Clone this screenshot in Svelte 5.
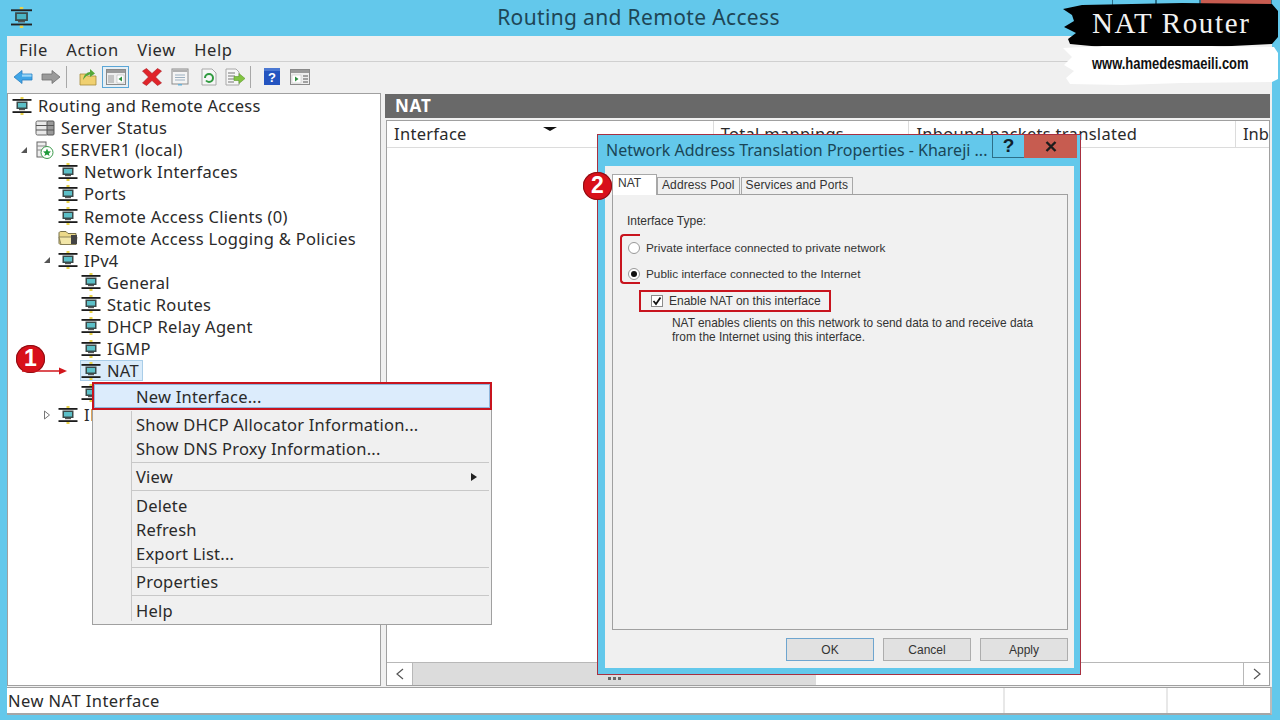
<script>
  const menus = ["File", "Action", "View", "Help"];

  const tree = [
    { label: "Routing and Remote Access", level: 0, icon: "net" },
    { label: "Server Status", level: 1, icon: "status" },
    { label: "SERVER1 (local)", level: 1, icon: "server", exp: "open" },
    { label: "Network Interfaces", level: 2, icon: "net" },
    { label: "Ports", level: 2, icon: "net" },
    { label: "Remote Access Clients (0)", level: 2, icon: "net" },
    { label: "Remote Access Logging & Policies", level: 2, icon: "folder" },
    { label: "IPv4", level: 2, icon: "net", exp: "open" },
    { label: "General", level: 3, icon: "net" },
    { label: "Static Routes", level: 3, icon: "net" },
    { label: "DHCP Relay Agent", level: 3, icon: "net" },
    { label: "IGMP", level: 3, icon: "net" },
    { label: "NAT", level: 3, icon: "net", selected: true },
    { label: "", level: 3, icon: "net" },
    { label: "IPv6", level: 2, icon: "net", exp: "closed" }
  ];

  const contextMenu = [
    [{ label: "New Interface...", hot: true }],
    [{ label: "Show DHCP Allocator Information..." }, { label: "Show DNS Proxy Information..." }],
    [{ label: "View", sub: true }],
    [{ label: "Delete" }, { label: "Refresh" }, { label: "Export List..." }],
    [{ label: "Properties" }],
    [{ label: "Help" }]
  ];
</script>

{#snippet netIcon()}
  <svg class="ico" viewBox="0 0 20 18" width="20" height="18">
    <rect x="8.5" y="0" width="3" height="2" fill="#e8d24a" />
    <rect x="0.5" y="2" width="19" height="1.8" fill="#1c1c1c" />
    <rect x="4.5" y="4.5" width="11" height="7.5" fill="#3a4a4a" />
    <rect x="6" y="6" width="8" height="4.5" fill="#5cc0c8" />
    <rect x="7" y="12" width="6" height="1.2" fill="#555" />
    <rect x="0.5" y="14.2" width="19" height="1.8" fill="#1c1c1c" />
    <rect x="8.5" y="16" width="3" height="2" fill="#e8d24a" />
  </svg>
{/snippet}

<div class="window">
  <header class="titlebar">
    <svg class="appicon" viewBox="0 0 20 18" width="25" height="21">
      <rect x="8.5" y="0" width="3" height="2" fill="#e8d24a" />
      <rect x="1" y="2" width="18" height="1.6" fill="#222" />
      <rect x="4.5" y="4.5" width="11" height="7.5" fill="#3a4a4a" />
      <rect x="6" y="6" width="8" height="4.5" fill="#4ab4c4" />
      <rect x="7" y="12" width="6" height="1.2" fill="#555" />
      <rect x="1" y="14.2" width="18" height="1.6" fill="#222" />
      <rect x="8.5" y="16" width="3" height="2" fill="#e8d24a" />
    </svg>
    <div class="apptitle">Routing and Remote Access</div>
    <div class="winbtns">
      <span class="winbtn min"></span>
      <span class="winbtn max"></span>
      <span class="winbtn close"></span>
    </div>
  </header>

  <div class="client">
    <nav class="menubar">
      {#each menus as m}<span>{m}</span>{/each}
    </nav>

    <div class="toolbar">
      <svg class="tb back" viewBox="0 0 20 16" width="20" height="16">
        <path d="M1 8 L9 1.5 V5 H19 V11 H9 V14.5 Z" fill="#3fa5e6" stroke="#2a7fc0" stroke-width="0.8" />
        <rect x="9" y="5.5" width="9.5" height="2.2" fill="#9ad6f7" />
      </svg>
      <svg class="tb fwd" viewBox="0 0 20 16" width="20" height="16">
        <path d="M19 8 L11 1.5 V5 H1 V11 H11 V14.5 Z" fill="#9a9a9a" stroke="#6e6e6e" stroke-width="0.8" />
      </svg>
      <span class="tbsep first"></span>
      <svg class="tb up" viewBox="0 0 18 18" width="18" height="18">
        <path d="M1 6 H7 L8.5 8 H17 V17 H1 Z" fill="#f0d070" stroke="#a58b3a" stroke-width="0.8" />
        <path d="M4 12 C5 6 8 4.5 11 4 V1 L16 5.5 L11 9 V6.5 C8 7 6 9 4 12 Z" fill="#55a83a" />
      </svg>
      <span class="tbactive">
        <svg viewBox="0 0 20 16" width="20" height="16">
          <rect x="0.5" y="0.5" width="19" height="15" fill="#eee" stroke="#8a8a8a" />
          <rect x="1" y="1" width="18" height="3" fill="#9a9a9a" />
          <rect x="2" y="6" width="6" height="8" fill="#c4c4c4" />
          <path d="M11 6 H18 V14 H11 Z" fill="#fff" stroke="#aaa" stroke-width="0.5" />
          <path d="M16 7.5 L12.5 10 L16 12.5 Z" fill="#2f8f3f" />
        </svg>
      </span>
      <svg class="tb del" viewBox="0 0 20 18" width="20" height="18">
        <path d="M0.5 3 L4.5 0.5 L10 5.5 L15.5 0.5 L19.5 3 L13.5 9 L19.5 15 L15.5 17.5 L10 12.5 L4.5 17.5 L0.5 15 L6.5 9 Z" fill="#e0242a" stroke="#a81a1e" stroke-width="0.6" />
      </svg>
      <svg class="tb props" viewBox="0 0 18 18" width="18" height="18">
        <rect x="1" y="1" width="16" height="15" fill="#f4f4f4" stroke="#8c8c8c" />
        <rect x="1.5" y="1.5" width="15" height="2.5" fill="#b0b0b0" />
        <path d="M4 7 H14 M4 9.5 H14 M4 12 H14" stroke="#9cb0c0" stroke-width="1" />
        <rect x="7" y="16" width="4" height="1.5" fill="#6ab2d8" />
      </svg>
      <svg class="tb refresh" viewBox="0 0 16 18" width="16" height="18">
        <path d="M1 1 H11 L15 5 V17 H1 Z" fill="#f6f6f6" stroke="#a8a8a8" />
        <path d="M4 10 A4 4 0 1 1 8 14 A4 4 0 0 1 5 12.5" fill="none" stroke="#2f9a3f" stroke-width="2" />
      </svg>
      <svg class="tb export" viewBox="0 0 20 18" width="20" height="18">
        <path d="M1 1 H11 L14 4 V17 H1 Z" fill="#f6f6f6" stroke="#a8a8a8" />
        <path d="M3 5 H10 M3 8 H10 M3 11 H9 M3 14 H9" stroke="#777" stroke-width="1" />
        <path d="M9 8.5 H14 V5.5 L20 10.5 L14 15.5 V12.5 H9 Z" fill="#82c341" stroke="#5a9a2a" stroke-width="0.6" />
      </svg>
      <span class="tbsep second"></span>
      <svg class="tb help" viewBox="0 0 16 17" width="16" height="17">
        <rect x="0" y="0" width="16" height="17" fill="#2454c0" />
        <rect x="0" y="0" width="16" height="3" fill="#4b78d2" />
        <text x="8" y="13.5" text-anchor="middle" font-family="Liberation Sans" font-weight="700" font-size="13" fill="#fff">?</text>
      </svg>
      <svg class="tb view" viewBox="0 0 20 16" width="20" height="16">
        <rect x="0.5" y="0.5" width="19" height="15" fill="#eee" stroke="#8a8a8a" />
        <rect x="1" y="1" width="18" height="3" fill="#9a9a9a" />
        <rect x="2" y="6" width="9" height="8" fill="#fff" stroke="#bbb" stroke-width="0.5" />
        <path d="M5 7.5 L8.5 10 L5 12.5 Z" fill="#2f8f3f" />
        <path d="M13 7 H18 M13 10 H18 M13 13 H18" stroke="#888" stroke-width="1.4" />
      </svg>
    </div>

    <div class="panes">
      <aside class="treepane">
        {#each tree as node}
          <div class="row l{node.level}">
            <span class="exp">
              {#if node.exp === "open"}
                <svg viewBox="0 0 8 8" width="8" height="8"><path d="M7 1 V7 H1 Z" fill="#555" /></svg>
              {:else if node.exp === "closed"}
                <svg viewBox="0 0 8 10" width="8" height="10"><path d="M1.5 1 L6.5 5 L1.5 9 Z" fill="#fff" stroke="#777" /></svg>
              {/if}
            </span>
            <span class="node" class:selected={node.selected}>
              {#if node.icon === "net"}
                {@render netIcon()}
              {:else if node.icon === "status"}
                <svg class="ico" viewBox="0 0 20 16" width="20" height="16">
                  <rect x="1" y="1" width="12" height="14" rx="1.5" fill="#e8e8e8" stroke="#666" />
                  <rect x="12" y="1" width="7" height="14" rx="1" fill="#9a9a9a" stroke="#555" />
                  <path d="M1 5.5 H13 M1 10 H13 M13 5.5 H19 M13 10 H19" stroke="#555" />
                </svg>
              {:else if node.icon === "server"}
                <svg class="ico" viewBox="0 0 20 18" width="20" height="18">
                  <rect x="2" y="1" width="9" height="15" fill="#eee" stroke="#666" />
                  <path d="M2 5 H11 M2 9 H11" stroke="#888" />
                  <circle cx="12" cy="11.5" r="6" fill="#fff" stroke="#3a9a4a" />
                  <path d="M12 7.5 L13.2 10.3 L16 10.5 L13.8 12.4 L14.6 15 L12 13.6 L9.4 15 L10.2 12.4 L8 10.5 L10.8 10.3 Z" fill="#1f9a3a" />
                </svg>
              {:else}
                <svg class="ico" viewBox="0 0 20 16" width="20" height="16">
                  <path d="M1 3 C1 2 2 1.5 3 1.5 H8 L10 3.5 H18 V14.5 H3 C2 14.5 1 14 1 13 Z" fill="#ecd98a" stroke="#77704a" />
                  <path d="M1 7 H19 L18 14.5 H3 Z" fill="#f2e6a8" stroke="#77704a" stroke-width="0.8" />
                  <rect x="13" y="5" width="6" height="9" fill="#444" />
                </svg>
              {/if}
              <span class="label">{node.label}</span>
            </span>
          </div>
        {/each}
      </aside>

      <main class="detail">
        <div class="detailhead">NAT</div>
        <div class="list">
          <div class="listhead">
            <div class="col c1">Interface<i class="sort"></i></div>
            <div class="col c2">Total mappings</div>
            <div class="col c3">Inbound packets translated</div>
            <div class="col c4">Inb</div>
          </div>
          <div class="listbody"></div>
          <div class="hscroll">
            <span class="arrowbtn">
              <svg viewBox="0 0 10 14" width="10" height="14"><path d="M8 2 L2 7 L8 12" fill="none" stroke="#555" stroke-width="1.2" /></svg>
            </span>
            <span class="thumb"><span class="grip"></span></span>
            <span class="trackrest"></span>
            <span class="arrowbtn right">
              <svg viewBox="0 0 10 14" width="10" height="14"><path d="M2 2 L8 7 L2 12" fill="none" stroke="#555" stroke-width="1.2" /></svg>
            </span>
          </div>
        </div>
      </main>
    </div>

    <footer class="status">
      <div class="cell wide">New NAT Interface</div>
      <div class="cell mid"></div>
      <div class="cell"></div>
    </footer>
  </div>

  <!-- context menu over the tree -->
  <div class="ctx">
    <span class="gutter"></span>
    {#each contextMenu as group, i}
      {#if i > 1}<div class="ctxsep"></div>{/if}
      {#each group as item}
        <div class="ctxitem" class:hot={item.hot}>
          <span>{item.label}</span>
          {#if item.sub}<i class="subarrow"></i>{/if}
        </div>
      {/each}
    {/each}
  </div>

  <!-- annotation 1 -->
  <div class="badge one">1</div>
  <svg class="arrow1" viewBox="0 0 46 10" width="46" height="10">
    <path d="M0 5 H38" stroke="#d2161c" stroke-width="1.6" />
    <path d="M37 1.5 L45 5 L37 8.5 Z" fill="#d2161c" />
  </svg>

  <!-- properties dialog -->
  <section class="dialog">
    <div class="dlgtitle">
      <span class="dlgname">Network Address Translation Properties - Khareji ...</span>
      <span class="dlgq">?</span>
      <span class="dlgx">
        <svg viewBox="0 0 12 11" width="12" height="11"><path d="M1.5 1 L10.5 10 M10.5 1 L1.5 10" stroke="#1c1c1c" stroke-width="2.4" /></svg>
      </span>
    </div>
    <div class="dlgbody">
      <div class="tabs">
        <span class="tab active">NAT</span>
        <span class="tab">Address Pool</span>
        <span class="tab">Services and Ports</span>
      </div>
      <div class="tabpanel">
        <div class="grouplabel">Interface Type:</div>
        <div class="radio"><i class="dot"></i>Private interface connected to private network</div>
        <div class="radio on"><i class="dot"></i>Public interface connected to the Internet</div>
        <div class="check">
          <i class="box">
            <svg viewBox="0 0 12 12" width="12" height="12"><path d="M2.5 6 L5 9 L9.5 2.5" fill="none" stroke="#111" stroke-width="1.8" /></svg>
          </i>
          Enable NAT on this interface
        </div>
        <p class="note">NAT enables clients on this network to send data to and receive data<br />from the Internet using this interface.</p>
      </div>
      <div class="dlgbtns">
        <button class="default">OK</button>
        <button>Cancel</button>
        <button>Apply</button>
      </div>
    </div>
    <span class="bracket"></span>
    <div class="badge two">2</div>
  </section>

  <!-- watermark -->
  <div class="brand">
    <svg class="brush" viewBox="0 0 216 82" width="216" height="82">
      <path d="M1 6 L20 2 L120 0 L210 1 L216 8 L216 34 L210 41 L150 44 L40 44 L8 41 L6 36 L14 30 L2 24 L12 18 L10 12 Z" fill="#000" />
      <path d="M1 45 L40 43 L150 43 L212 44 L216 50 L216 76 L210 79 L120 80 L60 82 L8 81 L4 75 L12 68 L2 62 L10 54 Z" fill="#fff" />
    </svg>
    <div class="brandtop">NAT Router</div>
    <div class="brandurl">www.hamedesmaeili.com</div>
  </div>
</div>

<style>
  :global(body) {
    margin: 0;
    overflow: hidden;
  }
  .window {
    position: relative;
    width: 1280px;
    height: 720px;
    display: flex;
    flex-direction: column;
    background: #63c8eb;
    font-family: "Noto Sans", sans-serif;
    color: #2a2a2a;
    overflow: hidden;
  }
  .titlebar {
    height: 36px;
    flex: none;
    display: grid;
    grid-template-columns: 1fr auto 1fr;
    padding-left: 9px;
  }
  .appicon {
    margin-top: 7px;
  }
  .apptitle {
    font-size: 21px;
    line-height: 35px;
    color: #1e4656;
    letter-spacing: 0.35px;
    margin-right: 12px;
  }
  .winbtns {
    justify-self: end;
    display: flex;
    height: 20px;
    margin-right: 8px;
  }
  .winbtn {
    display: block;
    border: 1px solid #2d6f88;
    border-top: none;
    width: 42px;
  }
  .winbtn.close {
    width: 70px;
    background: #c75c50;
  }
  .client {
    flex: 1;
    display: flex;
    flex-direction: column;
    margin: 0 8px 5px 7px;
    background: #f0f0f0;
    min-height: 0;
    font-size: 16.5px;
    letter-spacing: 0.3px;
  }
  .menubar {
    height: 26px;
    flex: none;
    box-sizing: border-box;
    padding: 2px 0 0 12px;
    display: flex;
    align-items: center;
    gap: 18.5px;
    letter-spacing: 0.6px;
    border-bottom: 1px solid #d0d0d0;
  }
  .toolbar {
    height: 29px;
    flex: none;
    display: flex;
    align-items: center;
  }
  .tb {
    flex: none;
  }
  .back {
    margin-left: 6px;
  }
  .fwd {
    margin-left: 8px;
  }
  .tbsep {
    width: 1px;
    height: 22px;
    background: #a8a8a8;
  }
  .tbsep.first {
    margin-left: 5px;
  }
  .up {
    margin-left: 12px;
  }
  .tbactive {
    margin-left: 5px;
    width: 27px;
    height: 22px;
    box-sizing: border-box;
    border: 1.5px solid #5ba6d6;
    display: flex;
    align-items: center;
    justify-content: center;
    background: #e6eff5;
  }
  .del {
    margin-left: 13px;
  }
  .props {
    margin-left: 9px;
  }
  .refresh {
    margin-left: 12px;
  }
  .export {
    margin-left: 8px;
  }
  .tbsep.second {
    margin-left: 5px;
  }
  .help {
    margin-left: 13px;
  }
  .view {
    margin-left: 10px;
  }
  .panes {
    flex: 1;
    display: flex;
    gap: 4px;
    min-height: 0;
    padding-top: 2px;
  }
  .treepane {
    width: 374px;
    flex: none;
    box-sizing: border-box;
    background: #fff;
    border: 1px solid #a0a0a0;
    padding-top: 0.5px;
  }
  .row {
    height: 22.1px;
    display: flex;
    align-items: center;
    white-space: nowrap;
  }
  .exp {
    width: 14px;
    flex: none;
    display: flex;
    align-items: center;
  }
  .l0 {
    padding-left: 3px;
  }
  .l0 .exp {
    display: none;
  }
  .l1 {
    padding-left: 12px;
  }
  .l2 {
    padding-left: 35px;
  }
  .l3 {
    padding-left: 58px;
  }
  .node {
    display: inline-flex;
    align-items: center;
    gap: 6px;
    height: 21px;
    box-sizing: border-box;
    padding: 0 3px 0 0;
    border: 1px solid transparent;
  }
  .node.selected {
    background: #d9ebfa;
    border-color: #a9cde8;
  }
  .ico {
    flex: none;
  }
  .detail {
    flex: 1;
    display: flex;
    flex-direction: column;
    min-width: 0;
    background: #f0f0f0;
  }
  .detailhead {
    height: 24px;
    flex: none;
    margin-top: 1px;
    margin-right: 2px;
    background: #696969;
    color: #fff;
    font-weight: 700;
    font-size: 17px;
    letter-spacing: 0.8px;
    line-height: 24px;
    padding-left: 10px;
  }
  .list {
    flex: 1;
    display: flex;
    flex-direction: column;
    margin: 2px 2px 0 1px;
    background: #fff;
    border: 1px solid #a0a0a0;
    min-height: 0;
  }
  .listhead {
    height: 26px;
    flex: none;
    display: flex;
    border-bottom: 1px solid #dcdcdc;
  }
  .col {
    position: relative;
    box-sizing: border-box;
    padding-left: 7px;
    line-height: 26px;
    border-right: 1px solid #dcdcdc;
    white-space: nowrap;
  }
  .c1 {
    width: 327px;
  }
  .c2 {
    width: 196px;
  }
  .c3 {
    width: 327px;
  }
  .c4 {
    flex: 1;
    border-right: none;
    letter-spacing: 0;
  }
  .sort {
    position: absolute;
    left: 156px;
    top: 6px;
    border-style: solid;
    border-width: 4px 7px 0;
    border-color: #111 transparent transparent;
  }
  .listbody {
    flex: 1;
  }
  .hscroll {
    height: 22px;
    flex: none;
    display: flex;
    border-top: 1px solid #b8b8b8;
  }
  .arrowbtn {
    width: 25px;
    flex: none;
    display: flex;
    align-items: center;
    justify-content: center;
    border-right: 1px solid #b8b8b8;
  }
  .arrowbtn.right {
    border-right: none;
    border-left: 1px solid #b8b8b8;
  }
  .thumb {
    width: 403px;
    flex: none;
    background: #dcdcdc;
    display: flex;
    align-items: center;
    justify-content: center;
  }
  .grip {
    width: 13px;
    margin-top: 8px;
    border-top: 3px dotted #666;
  }
  .trackrest {
    flex: 1;
  }
  .status {
    height: 28px;
    flex: none;
    margin-top: 1px;
    background: #fff;
    display: flex;
    border-top: 1px solid #a0a0a0;
    border-bottom: 2px solid #a6a6a6;
    border-right: 2px solid #bbb;
    box-sizing: border-box;
    letter-spacing: 0.45px;
  }
  .cell {
    flex: 1;
    line-height: 26px;
    padding-left: 1px;
  }
  .cell.wide {
    flex: none;
    width: 995px;
    border-right: 2px solid #e8e8e8;
  }
  .cell.mid {
    flex: none;
    width: 160px;
    border-right: 2px solid #e8e8e8;
  }
  .ctx {
    position: absolute;
    left: 92px;
    top: 382px;
    width: 400px;
    height: 243px;
    box-sizing: border-box;
    background: #f0f0f0;
    border: 1px solid #a0a0a0;
    font-size: 16.5px;
    letter-spacing: 0.22px;
  }
  .gutter {
    position: absolute;
    left: 38px;
    top: 28px;
    bottom: 3px;
    width: 1px;
    background: #c8c8c8;
  }
  .ctxitem {
    height: 24.3px;
    display: flex;
    align-items: center;
    justify-content: space-between;
    padding: 0 14px 0 43px;
  }
  .ctxitem.hot {
    height: 28px;
    margin: -1px -1px 2px;
    padding-left: 42px;
    box-sizing: border-box;
    background: #dcecfc;
    border: 2px solid #c8141e;
    box-shadow: inset 0 0 0 1px #8fb6dc;
  }
  .subarrow {
    border-style: solid;
    border-width: 4px 0 4px 6px;
    border-color: transparent transparent transparent #222;
  }
  .ctxsep {
    height: 4px;
    margin: 1px 2px -1px 39px;
    box-sizing: border-box;
    border-top: 1px solid #c8c8c8;
  }
  .badge {
    position: absolute;
    border-radius: 50%;
    background: #d8101a;
    color: #fff;
    font-family: "Liberation Sans", sans-serif;
    font-weight: 700;
    text-align: center;
    box-shadow: 0 0 0 1px #8a0f14 inset;
  }
  .badge.one {
    left: 16px;
    top: 345px;
    width: 29px;
    height: 28px;
    font-size: 23px;
    line-height: 27px;
  }
  .arrow1 {
    position: absolute;
    left: 22px;
    top: 366px;
  }
  .dialog {
    position: absolute;
    left: 597px;
    top: 134px;
    width: 484px;
    height: 541px;
    box-sizing: border-box;
    background: #63c8eb;
    border: 1px solid #a83040;
    display: flex;
    flex-direction: column;
  }
  .dlgtitle {
    height: 31px;
    flex: none;
    display: flex;
    align-items: flex-start;
    padding-right: 3px;
  }
  .dlgname {
    flex: 1;
    font-size: 16px;
    line-height: 30px;
    padding-left: 8px;
    color: #1a4657;
    white-space: nowrap;
    overflow: hidden;
  }
  .dlgq {
    width: 32px;
    height: 23px;
    box-sizing: border-box;
    border: 1px solid #2d6f88;
    border-top: none;
    border-right: none;
    text-align: center;
    font: 700 19px/21px "Liberation Sans", sans-serif;
    color: #10212c;
  }
  .dlgx {
    width: 53px;
    height: 23px;
    background: #c75c50;
    display: flex;
    align-items: center;
    justify-content: center;
  }
  .dlgbody {
    flex: 1;
    display: flex;
    flex-direction: column;
    margin: 0 6px 6px 7px;
    background: #f0f0f0;
    padding: 8px 6px 0 7px;
    font-family: "Liberation Sans", sans-serif;
    font-size: 12px;
    color: #333;
    min-height: 0;
  }
  .tabs {
    display: flex;
    align-items: flex-end;
    height: 20px;
    flex: none;
    position: relative;
    z-index: 1;
  }
  .tab {
    height: 17px;
    line-height: 15px;
    box-sizing: border-box;
    padding: 0 4px;
    border: 1px solid #a8a8a8;
    border-bottom: none;
    margin-left: 1px;
    letter-spacing: 0.1px;
  }
  .tab.active {
    height: 21px;
    width: 45px;
    margin: 0 -1px -1px 0;
    padding: 0 0 0 5px;
    background: #fff;
    line-height: 17px;
    letter-spacing: 0;
  }
  .tabpanel {
    flex: 1;
    box-sizing: border-box;
    border: 1px solid #a0a0a0;
    background: #f1f1f1;
    padding: 19px 14px 0;
  }
  .grouplabel {
    line-height: 14px;
  }
  .radio {
    display: flex;
    align-items: center;
    gap: 6px;
    height: 26px;
    padding-left: 1px;
    font-size: 11.8px;
  }
  .grouplabel + .radio {
    margin-top: 7px;
  }
  .dot {
    width: 12px;
    height: 12px;
    box-sizing: border-box;
    border-radius: 50%;
    border: 1px solid #999;
    background: #fff;
    position: relative;
  }
  .radio.on .dot::after {
    content: "";
    position: absolute;
    left: 2px;
    top: 2px;
    width: 6px;
    height: 6px;
    border-radius: 50%;
    background: #111;
  }
  .check {
    display: flex;
    align-items: center;
    gap: 6px;
    width: 192px;
    height: 22px;
    box-sizing: border-box;
    margin: 3px 0 0 12px;
    padding-left: 11px;
    border: 2px solid #c8141e;
  }
  .box {
    width: 12px;
    height: 12px;
    flex: none;
    box-sizing: border-box;
    border: 1px solid #8c8c8c;
    background: #fff;
    display: flex;
    align-items: center;
    justify-content: center;
    margin-left: -1px;
  }
  .box svg {
    flex: none;
  }
  .note {
    margin: 4px 0 0 45px;
    line-height: 14px;
    font-size: 11.9px;
    white-space: nowrap;
  }
  .dlgbtns {
    height: 38px;
    flex: none;
    box-sizing: border-box;
    padding-top: 1px;
    display: flex;
    justify-content: flex-end;
    align-items: center;
    gap: 9px;
  }
  button {
    width: 88px;
    height: 23px;
    padding: 0;
    box-sizing: border-box;
    background: #e1e1e1;
    border: 1px solid #adadad;
    font: inherit;
    color: #333;
  }
  button.default {
    border-color: #6ea5cf;
  }
  .bracket {
    position: absolute;
    left: 22px;
    top: 99px;
    width: 20px;
    height: 50px;
    box-sizing: border-box;
    border: 2px solid #c8141e;
    border-right: none;
    border-radius: 4px 0 0 4px;
  }
  .badge.two {
    left: -15px;
    top: 37px;
    width: 29px;
    height: 28px;
    font-size: 23px;
    line-height: 27px;
  }
  .brand {
    position: absolute;
    left: 1062px;
    top: 3px;
    width: 216px;
    height: 82px;
  }
  .brush {
    display: block;
    position: absolute;
    inset: 0;
  }
  .brandtop {
    position: relative;
    padding-left: 30px;
    font-family: "Liberation Serif", serif;
    font-size: 29px;
    line-height: 41px;
    color: #f2f2f2;
    letter-spacing: 1.65px;
    white-space: nowrap;
  }
  .brandurl {
    position: relative;
    margin-top: 10px;
    margin-left: 30px;
    font-family: "Liberation Sans", sans-serif;
    font-weight: 700;
    font-size: 16px;
    line-height: 20px;
    color: #111;
    white-space: nowrap;
    transform: scaleX(0.81);
    transform-origin: left center;
  }
</style>
